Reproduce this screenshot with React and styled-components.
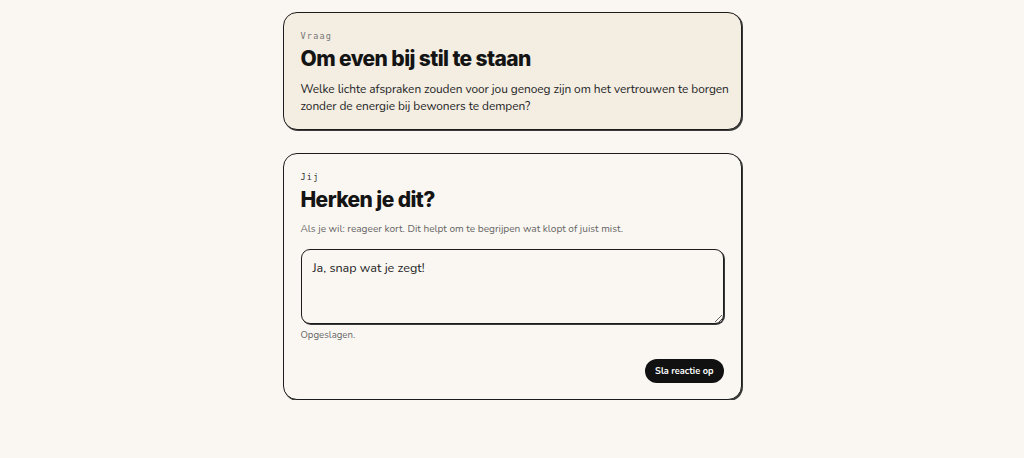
import React from 'react';
import styled, { createGlobalStyle } from 'styled-components';

const GlobalStyle = createGlobalStyle`
  html, body {
    margin: 0;
    padding: 0;
    background: #faf7f2;
  }
  body {
    font-family: "Nunito", "Lato", "Noto Sans", sans-serif;
    color: #1a1a1a;
  }
`

const Page = styled.div`
  display: flex;
  flex-direction: column;
  align-items: center;
  gap: 23px;
  padding-top: 12px;
`

const Card = styled.section`
  box-sizing: border-box;
  width: 459px;
  background: ${p => p.$tint ? '#f3ede2' : '#faf7f2'};
  border: 1px solid #1c1c1c;
  border-radius: 14px;
  box-shadow: 1px 1px 0 #3a3a3a;
  padding: ${p => p.$tint ? '18px 10px 14px 17px' : '18px 17px 16px'};
`

const Label = styled.div`
  font-family: "DejaVu Sans Mono", "Liberation Mono", monospace;
  font-size: 8.5px;
  letter-spacing: 1.2px;
  color: ${p => p.$dark ? '#333' : '#777'};
  margin-bottom: 5px;
`

const Title = styled.h2`
  margin: 0 0 10px;
  font-family: "Inter", "Liberation Sans", sans-serif;
  font-weight: 800;
  font-size: 21px;
  letter-spacing: -0.6px;
  line-height: 1.2;
  color: #141414;
`

const Body = styled.p`
  margin: 0;
  font-size: 11.9px;
  letter-spacing: -0.05px;
  line-height: 17px;
  color: #222;
`

const Hint = styled.p`
  margin: 0 0 13px;
  font-size: 10.1px;
  color: #666;
`

const TextArea = styled.textarea`
  box-sizing: border-box;
  display: block;
  width: 100%;
  height: 75px;
  padding: 9px 11px;
  border: 1px solid #1c1c1c;
  border-radius: 9px;
  box-shadow: 1px 1px 0 #3a3a3a;
  background: #faf7f2;
  font-family: "Nunito", "Lato", "Noto Sans", sans-serif;
  font-size: 12.6px;
  color: #222;
  resize: vertical;
  outline: none;
`

const Status = styled.div`
  margin-top: 4px;
  font-size: 9.6px;
  color: #666;
`

const Actions = styled.div`
  display: flex;
  justify-content: flex-end;
  margin-top: 18px;
`

const Button = styled.button`
  height: 24px;
  padding: 0 10px;
  border: none;
  border-radius: 12px;
  background: #111;
  color: #fff;
  font-family: "Nunito", "Lato", "Noto Sans", sans-serif;
  font-weight: 700;
  font-size: 9.2px;
  cursor: pointer;
`

export default function App() {
  return (
    <>
      <GlobalStyle />
      <Page>
        <Card $tint>
          <Label>Vraag</Label>
          <Title>Om even bij stil te staan</Title>
          <Body>
            Welke lichte afspraken zouden voor jou genoeg zijn om het vertrouwen te borgen zonder de energie bij bewoners te dempen?
          </Body>
        </Card>
        <Card>
          <Label $dark>Jij</Label>
          <Title>Herken je dit?</Title>
          <Hint>Als je wil: reageer kort. Dit helpt om te begrijpen wat klopt of juist mist.</Hint>
          <TextArea defaultValue="Ja, snap wat je zegt!" />
          <Status>Opgeslagen.</Status>
          <Actions>
            <Button>Sla reactie op</Button>
          </Actions>
        </Card>
      </Page>
    </>
  );
}
